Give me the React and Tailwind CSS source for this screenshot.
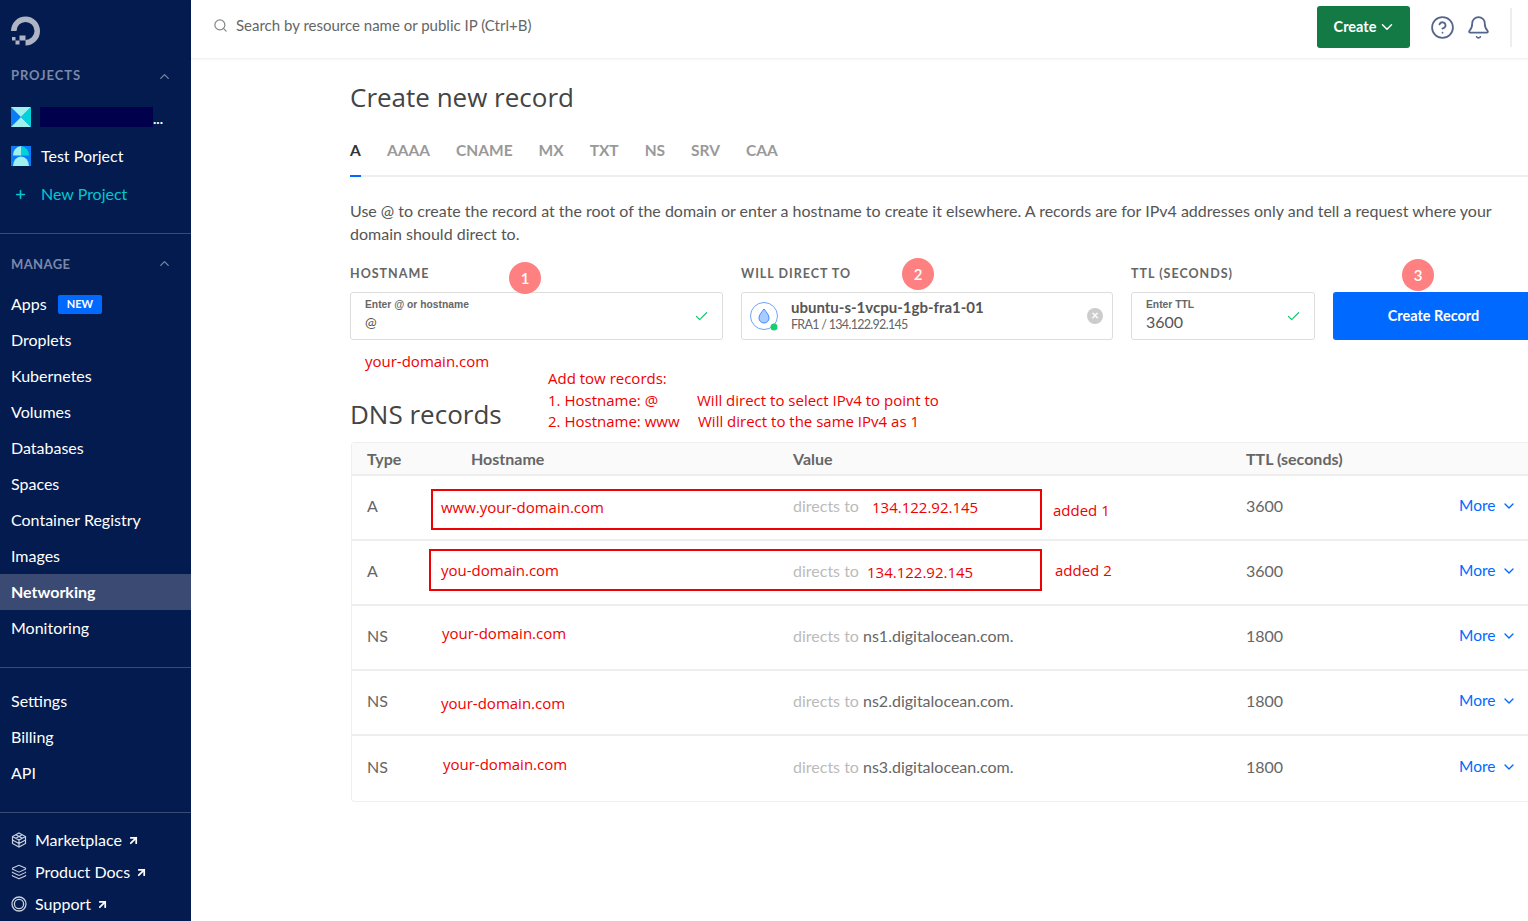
import { ChevronUp, ChevronDown, Plus, Search, CircleHelp, Bell, Check, ArrowUpRight, Layers } from "lucide-react";

const manage = ["Droplets", "Kubernetes", "Volumes", "Databases", "Spaces", "Container Registry", "Images"];
const tabs = ["AAAA", "CNAME", "MX", "TXT", "NS", "SRV", "CAA"];
const records = [
  { type: "A", ttl: "3600", value: "" },
  { type: "A", ttl: "3600", value: "" },
  { type: "NS", ttl: "1800", value: "ns1.digitalocean.com." },
  { type: "NS", ttl: "1800", value: "ns2.digitalocean.com." },
  { type: "NS", ttl: "1800", value: "ns3.digitalocean.com." },
];

function Logo() {
  return (
    <svg width="30" height="30" viewBox="0 0 30 30" fill="#aeb4c4">
      <path d="M14.5 29.5v-5.6a9 9 0 1 0-9-9H0A14.5 14.5 0 1 1 14.5 29.5z" />
      <rect x="8.5" y="19.5" width="6" height="5" />
      <rect x="4.5" y="24.5" width="4" height="4" />
      <rect x="1" y="21" width="3.5" height="3.5" />
    </svg>
  );
}

function CubeIcon() {
  return (
    <svg width="16" height="16" viewBox="0 0 16 16" fill="none" stroke="currentColor" strokeWidth="1.2">
      <path d="M8 1l6.5 3.5v7L8 15l-6.5-3.5v-7z" />
      <path d="M1.5 4.5L8 8l6.5-3.5M8 8v7M1.5 8L8 11.5 14.5 8M4.8 2.8l6.5 3.5M11.2 2.8L4.8 6.3" />
    </svg>
  );
}

function RingIcon() {
  return (
    <svg width="16" height="16" viewBox="0 0 16 16" fill="none" stroke="currentColor" strokeWidth="1.3">
      <circle cx="8" cy="8" r="7" />
      <circle cx="8" cy="8" r="4.6" />
    </svg>
  );
}

function NavRow({ children, active }) {
  return (
    <div className={`h-9 flex items-center pl-[11px] text-[16px] ${active ? "bg-[#3a4a73] font-bold" : ""}`}>
      {children}
    </div>
  );
}

function Badge({ n, className }) {
  return (
    <div className={`absolute w-8 h-8 rounded-full bg-[#ff8080] text-white text-[15px] font-semibold flex items-center justify-center ${className}`}>
      {n}
    </div>
  );
}

function Note({ children, className }) {
  return <div className={`absolute text-[15px] leading-5 text-[#f00000] whitespace-nowrap font-['Open_Sans',sans-serif] ${className}`}>{children}</div>;
}

export default function App() {
  return (
    <div className="flex h-[921px] w-[1528px] overflow-hidden bg-white font-['Lato',sans-serif] text-[#444]">
      <aside className="w-[191px] shrink-0 bg-[#031b4e] text-white flex flex-col">
        <div className="pl-[11px] pt-[16px] h-[62px]"><Logo /></div>
        <div className="h-[28px] pl-[11px] pr-[19px] flex items-center justify-between text-[13px] font-bold tracking-[0.9px] text-[#7b88a8]">
          PROJECTS <ChevronUp size={15} />
        </div>
        <div className="h-[51px] mt-[1px] pl-[11px] flex items-center">
          <svg width="20" height="20" viewBox="0 0 20 20">
            <rect width="20" height="20" fill="#0a7cf5" />
            <path d="M0 0h20L10 10zM0 20h20L10 10z" fill="#9ff0ee" />
            <path d="M20 0v20L10 10z" fill="#00d4d8" />
          </svg>
          <div className="w-[113px] h-5 ml-[9px] bg-[#00004d]" />
          <span className="text-[14px] font-bold leading-none mt-1">...</span>
        </div>
        <div className="h-[28px] pl-[11px] flex items-center gap-[10px] text-[16px]">
          <svg width="20" height="20" viewBox="0 0 20 20">
            <rect width="20" height="20" fill="#0a7cf5" />
            <path d="M10 0a9 9 0 0 0-8 9.5h8z" fill="#9ff0ee" />
            <path d="M10 0a9 9 0 0 1 8 9.5h-8z" fill="#00d4d8" />
            <path d="M2 20a8 9 0 0 1 16 0z" fill="#9ff0ee" transform="translate(0 -1) scale(1 1.05)" />
          </svg>
          Test Porject
        </div>
        <div className="h-[28px] mt-[10px] pl-[14px] flex items-center gap-[14px] text-[16px] text-[#00c8d0]">
          <Plus size={13} strokeWidth={3} /> New Project
        </div>
        <div className="border-t border-[#3a4a73] mt-[25px]" />
        <div className="h-[52px] pt-[22px] pl-[11px] pr-[19px] flex items-start justify-between text-[13px] leading-4 font-bold tracking-[0.4px] text-[#7b88a8]">
          MANAGE <ChevronUp size={15} />
        </div>
        <NavRow>
          Apps
          <span className="ml-[11px] bg-[#0069ff] rounded-[2px] px-[9px] h-[19px] flex items-center text-[11px] font-bold">NEW</span>
        </NavRow>
        {manage.map((m) => <NavRow key={m}>{m}</NavRow>)}
        <NavRow active>Networking</NavRow>
        <NavRow>Monitoring</NavRow>
        <div className="border-t border-[#3a4a73] mt-[21px] mb-[15px]" />
        <NavRow>Settings</NavRow>
        <NavRow>Billing</NavRow>
        <NavRow>API</NavRow>
        <div className="border-t border-[#3a4a73] mt-[21px] mb-[11px]" />
        {[["Marketplace", <CubeIcon />], ["Product Docs", <Layers size={16} strokeWidth={1.6} />], ["Support", <RingIcon />]].map(([label, icon]) => (
          <div key={label} className="h-8 pl-[11px] flex items-center text-[16px]">
            <span className="w-6 text-[#c8cfdd]">{icon}</span>
            {label}
            <ArrowUpRight size={13} strokeWidth={3.2} className="ml-[5px]" />
          </div>
        ))}
      </aside>

      <main className="flex-1 min-w-0">
        <header className="h-[59px] flex items-center pl-[22px] pb-[4px] border-b border-[#f2f2f2] shadow-[0_1px_3px_rgba(0,0,0,0.04)]">
          <div className="flex items-center mb-[4px]">
            <Search size={15} className="text-[#888]" />
            <span className="ml-[8px] text-[15px] text-[#666]">Search by resource name or public IP (Ctrl+B)</span>
          </div>
          <div className="ml-auto flex items-center">
            <button className="w-[93px] h-[42px] pl-[3px] bg-[#137a45] rounded-[3px] text-white text-[14.5px] font-bold flex items-center justify-center">
              Create <ChevronDown size={18} className="ml-[2px]" />
            </button>
            <CircleHelp size={25} strokeWidth={1.7} className="ml-[20px] text-[#55658c]" />
            <Bell size={25} strokeWidth={1.7} className="ml-[11px] text-[#55658c]" />
            <div className="w-[2px] h-[39px] bg-[#eee] ml-[19px] mr-[16px]" />
          </div>
        </header>

        <div className="pl-[159px]">
          <h1 className="pt-[20px] text-[26px] leading-[36px] font-['Open_Sans',sans-serif] text-[#444]">Create new record</h1>
          <div className="flex h-[45px] mt-[17px] border-b-2 border-[#eee] gap-[26px] text-[15.5px] font-bold text-[#999] pt-[7px]">
            <div className="text-[#333] relative w-[11px]">A<div className="absolute left-0 h-[2px] w-[11px] bg-[#0069ff] top-[36px]" /></div>
            {tabs.map((t) => <div key={t}>{t}</div>)}
          </div>
          <p className="mt-[22px] pr-[30px] text-[16px] leading-[23px] text-[#555]">
            Use @ to create the record at the root of the domain or enter a hostname to create it elsewhere. A records are for IPv4 addresses only and tell a request where your domain should direct to.
          </p>

          <div className="relative grid grid-cols-[373px_372px_184px_195px] gap-x-[18px] mt-[17px]">
            <div className="h-[30px] text-[12.5px] font-bold tracking-[1px] text-[#666] pt-[3px]">HOSTNAME</div>
            <div className="h-[30px] text-[12.5px] font-bold tracking-[1px] text-[#666] pt-[3px]">WILL DIRECT TO</div>
            <div className="h-[30px] text-[12.5px] font-bold tracking-[1px] text-[#666] pt-[3px]">TTL (SECONDS)</div>
            <div />
            <div className="h-[48px] border border-[#ddd] rounded-[3px] pl-[14px] pr-[13px] flex items-center justify-between">
              <div className="mb-[3px]">
                <div className="text-[10.3px] leading-[14px] font-bold text-[#666] font-['Liberation_Sans',sans-serif]">Enter @ or hostname</div>
                <div className="text-[14px] leading-[20px] text-[#555]">@</div>
              </div>
              <Check size={15} className="text-[#15cd72]" />
            </div>
            <div className="h-[48px] border border-[#ddd] rounded-[3px] pl-[7px] pr-[9px] flex items-center">
              <svg width="30" height="30" viewBox="0 0 30 30" fill="none">
                <circle cx="15" cy="15" r="13.5" stroke="#6aa5ff" />
                <path d="M15 8c3 4 5 6 5 9a5 5 0 0 1-10 0c0-3 2-5 5-9z" fill="#a9cbff" stroke="#3d8bff" />
                <circle cx="25" cy="26" r="3.5" fill="#15cd72" />
              </svg>
              <div className="ml-[12px] flex-1 mb-[3px]">
                <div className="text-[15px] leading-[20px] font-bold text-[#555]">ubuntu-s-1vcpu-1gb-fra1-01</div>
                <div className="text-[12.5px] leading-[15px] tracking-[-0.7px] text-[#666]">FRA1 / 134.122.92.145</div>
              </div>
              <div className="w-4 h-4 rounded-full bg-[#ccc] text-white text-[13px] font-bold flex items-center justify-center">×</div>
            </div>
            <div className="h-[48px] border border-[#ddd] rounded-[3px] pl-[14px] pr-[13px] flex items-center justify-between">
              <div className="mb-[3px]">
                <div className="text-[10.3px] leading-[14px] font-bold text-[#666] font-['Liberation_Sans',sans-serif]">Enter TTL</div>
                <div className="text-[16px] leading-[20px] text-[#555]">3600</div>
              </div>
              <Check size={15} className="text-[#15cd72]" />
            </div>
            <button className="h-[48px] pl-[6px] bg-[#0069ff] rounded-l-[3px] text-white text-[14.5px] font-bold">Create Record</button>

            <Badge n="1" className="left-[159px] top-[0px]" />
            <Badge n="2" className="left-[552px] top-[-4px]" />
            <Badge n="3" className="left-[1052px] top-[-3px]" />
            <Note className="left-[15px] top-[89px]">your-domain.com</Note>
            <Note className="left-[198px] top-[106px]">Add tow records:</Note>
            <Note className="left-[198px] top-[128px]">1. Hostname: @</Note>
            <Note className="left-[198px] top-[149px]">2. Hostname: www</Note>
            <Note className="left-[347px] top-[128px]">Will direct to select IPv4 to point to</Note>
            <Note className="left-[348px] top-[149px]">Will direct to the same IPv4 as 1</Note>
          </div>

          <h2 className="mt-[56px] text-[26px] leading-[36px] font-['Open_Sans',sans-serif] text-[#444]">DNS records</h2>

          <div className="mt-[10px] ml-px border border-r-0 border-[#eee] rounded-l-[4px] text-[16px]">
            <div className="relative h-[33px] grid grid-cols-[104px_322px_453px_1fr] pl-[15px] items-center bg-[#fafafa] border-b-2 border-[#eee] font-bold text-[#666]">
              <div>Type</div><div>Hostname</div><div>Value</div><div>TTL (seconds)</div>
            </div>
            {records.map((r, i) => (
              <div key={i} className="relative h-[65px] grid grid-cols-[104px_322px_453px_213px_1fr] pl-[15px] pb-[4px] items-center border-b-2 last:border-b-0 border-[#eee] text-[#666]">
                <div>{r.type}</div>
                <div />
                <div>
                  <span className="text-[#bbb]">directs to </span>
                  <span>{r.value}</span>
                </div>
                <div>{r.ttl}</div>
                <div className="text-[#0069ff] text-[15.5px] flex items-center gap-[6px]">More <ChevronDown size={16} /></div>
                {i === 0 && <div className="absolute left-[79px] top-[13px] w-[611px] h-[41px] border-2 border-[#f00000]" />}
                {i === 1 && <div className="absolute left-[77px] top-[8px] w-[613px] h-[42px] border-2 border-[#f00000]" />}
                {i === 0 && <Note className="left-[89px] top-[21px]">www.your-domain.com</Note>}
                {i === 0 && <Note className="left-[520px] top-[21px]">134.122.92.145</Note>}
                {i === 0 && <Note className="left-[701px] top-[24px]">added 1</Note>}
                {i === 1 && <Note className="left-[89px] top-[19px]">you-domain.com</Note>}
                {i === 1 && <Note className="left-[515px] top-[21px]">134.122.92.145</Note>}
                {i === 1 && <Note className="left-[703px] top-[19px]">added 2</Note>}
                {i === 2 && <Note className="left-[90px] top-[17px]">your-domain.com</Note>}
                {i === 3 && <Note className="left-[89px] top-[22px]">your-domain.com</Note>}
                {i === 4 && <Note className="left-[91px] top-[18px]">your-domain.com</Note>}
              </div>
            ))}
          </div>
        </div>
      </main>
    </div>
  );
}
